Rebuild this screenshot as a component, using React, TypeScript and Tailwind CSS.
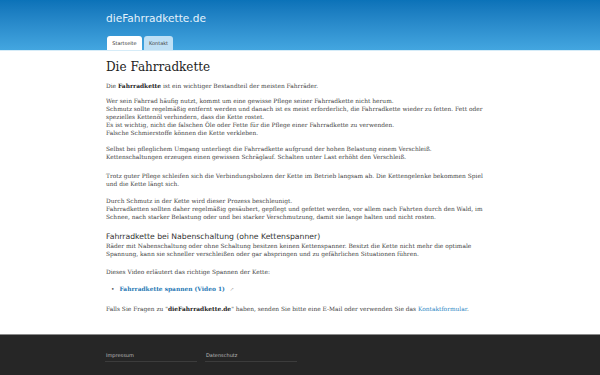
import React from "react";

const serif = { fontFamily: '"DejaVu Serif", "Liberation Serif", serif' };
const sans = { fontFamily: '"DejaVu Sans", "Liberation Sans", sans-serif' };

export default function App() {
  return (
    <div className="w-[600px] h-[375px] overflow-hidden bg-white flex flex-col">
      <header className="h-[51px] shrink-0 bg-gradient-to-b from-[#0b72b8] to-[#43a6e0] border-b border-[#d6ecf8] flex flex-col">
        <div className="w-[388px] ml-[106px] flex flex-col h-full">
          <div className="pt-[12px] text-[10.6px] leading-[13px] text-[#e4f2fc]" style={sans}>
            dieFahrradkette.de
          </div>
          <nav className="mt-auto flex gap-[2px] ml-[1px]" style={sans}>
            <span className="h-[14px] w-[35px] rounded-t-[3px] bg-white text-[5px] leading-[14px] text-[#333] text-center">
              Startseite
            </span>
            <span className="h-[14px] w-[29px] rounded-t-[3px] bg-[#bfe0f5] text-[5px] leading-[14px] text-[#444] text-center">
              Kontakt
            </span>
          </nav>
        </div>
      </header>
      <main className="flex-1 w-[390px] ml-[106px] text-[#444] text-[5.9px] leading-[8px]" style={serif}>
        <h1 className="mt-[8px] text-[12px] leading-[16px] font-normal text-[#222]" style={serif}>
          Die Fahrradkette
        </h1>
        <p className="mt-[7px]">
          Die <b className="text-[#222]">Fahrradkette</b> ist ein wichtiger Bestandteil der meisten Fahrräder.
        </p>
        <p className="mt-[7px]">
          Wer sein Fahrrad häufig nutzt, kommt um eine gewisse Pflege seiner Fahrradkette nicht herum.
          <br />
          Schmutz sollte regelmäßig entfernt werden und danach ist es meist erforderlich, die Fahrradkette wieder zu fetten. Fett oder spezielles Kettenöl verhindern, dass die Kette rostet.
          <br />
          Es ist wichtig, nicht die falschen Öle oder Fette für die Pflege einer Fahrradkette zu verwenden.
          <br />
          Falsche Schmierstoffe können die Kette verkleben.
        </p>
        <p className="mt-[8px]">
          Selbst bei pfleglichem Umgang unterliegt die Fahrradkette aufgrund der hohen Belastung einem Verschleiß.
          <br />
          Kettenschaltungen erzeugen einen gewissen Schräglauf. Schalten unter Last erhöht den Verschleiß.
        </p>
        <p className="mt-[11px]">
          Trotz guter Pflege schleifen sich die Verbindungsbolzen der Kette im Betrieb langsam ab. Die Kettengelenke bekommen Spiel und die Kette längt sich.
        </p>
        <p className="mt-[9px]">
          Durch Schmutz in der Kette wird dieser Prozess beschleunigt.
          <br />
          Fahrradketten sollten daher regelmäßig gesäubert, gepflegt und gefettet werden, vor allem nach Fahrten durch den Wald, im Schnee, nach starker Belastung oder und bei starker Verschmutzung, damit sie lange halten und nicht rosten.
        </p>
        <h2 className="mt-[11px] text-[7.7px] leading-[10px] font-normal text-[#333]" style={sans}>
          Fahrradkette bei Nabenschaltung (ohne Kettenspanner)
        </h2>
        <p className="mt-0">
          Räder mit Nabenschaltung oder ohne Schaltung besitzen keinen Kettenspanner. Besitzt die Kette nicht mehr die optimale Spannung, kann sie schneller verschleißen oder gar abspringen und zu gefährlichen Situationen führen.
        </p>
        <p className="mt-[10px]">Dieses Video erläutert das richtige Spannen der Kette:</p>
        <ul className="mt-[9px] ml-[5px] flex flex-col">
          <li className="flex items-center gap-[5px]">
            <span className="text-[#555]">•</span>
            <a className="font-bold text-[#1f78b4]">Fahrradkette spannen (Video 1)</a>
            <span className="text-[5px] text-[#999]">↗</span>
          </li>
        </ul>
        <p className="mt-[12px]">
          Falls Sie Fragen zu "<b className="text-[#222]">dieFahrradkette.de</b>" haben, senden Sie bitte eine E-Mail oder verwenden Sie das{" "}
          <a className="text-[#2a86c4]">Kontaktformular</a>.
        </p>
      </main>
      <footer className="h-[41px] shrink-0 bg-[#262626] border-t border-[#8a8a8a]">
        <div className="ml-[105px] mt-[17px] flex gap-[8px]" style={sans}>
          <div className="w-[92px] border-b border-[#3c3c3c] pb-[2px] pl-[1px] text-[5px] leading-[7px] text-[#bdbdbd]">Impressum</div>
          <div className="w-[92px] border-b border-[#3c3c3c] pb-[2px] pl-[1px] text-[5px] leading-[7px] text-[#bdbdbd]">Datenschutz</div>
        </div>
      </footer>
    </div>
  );
}
